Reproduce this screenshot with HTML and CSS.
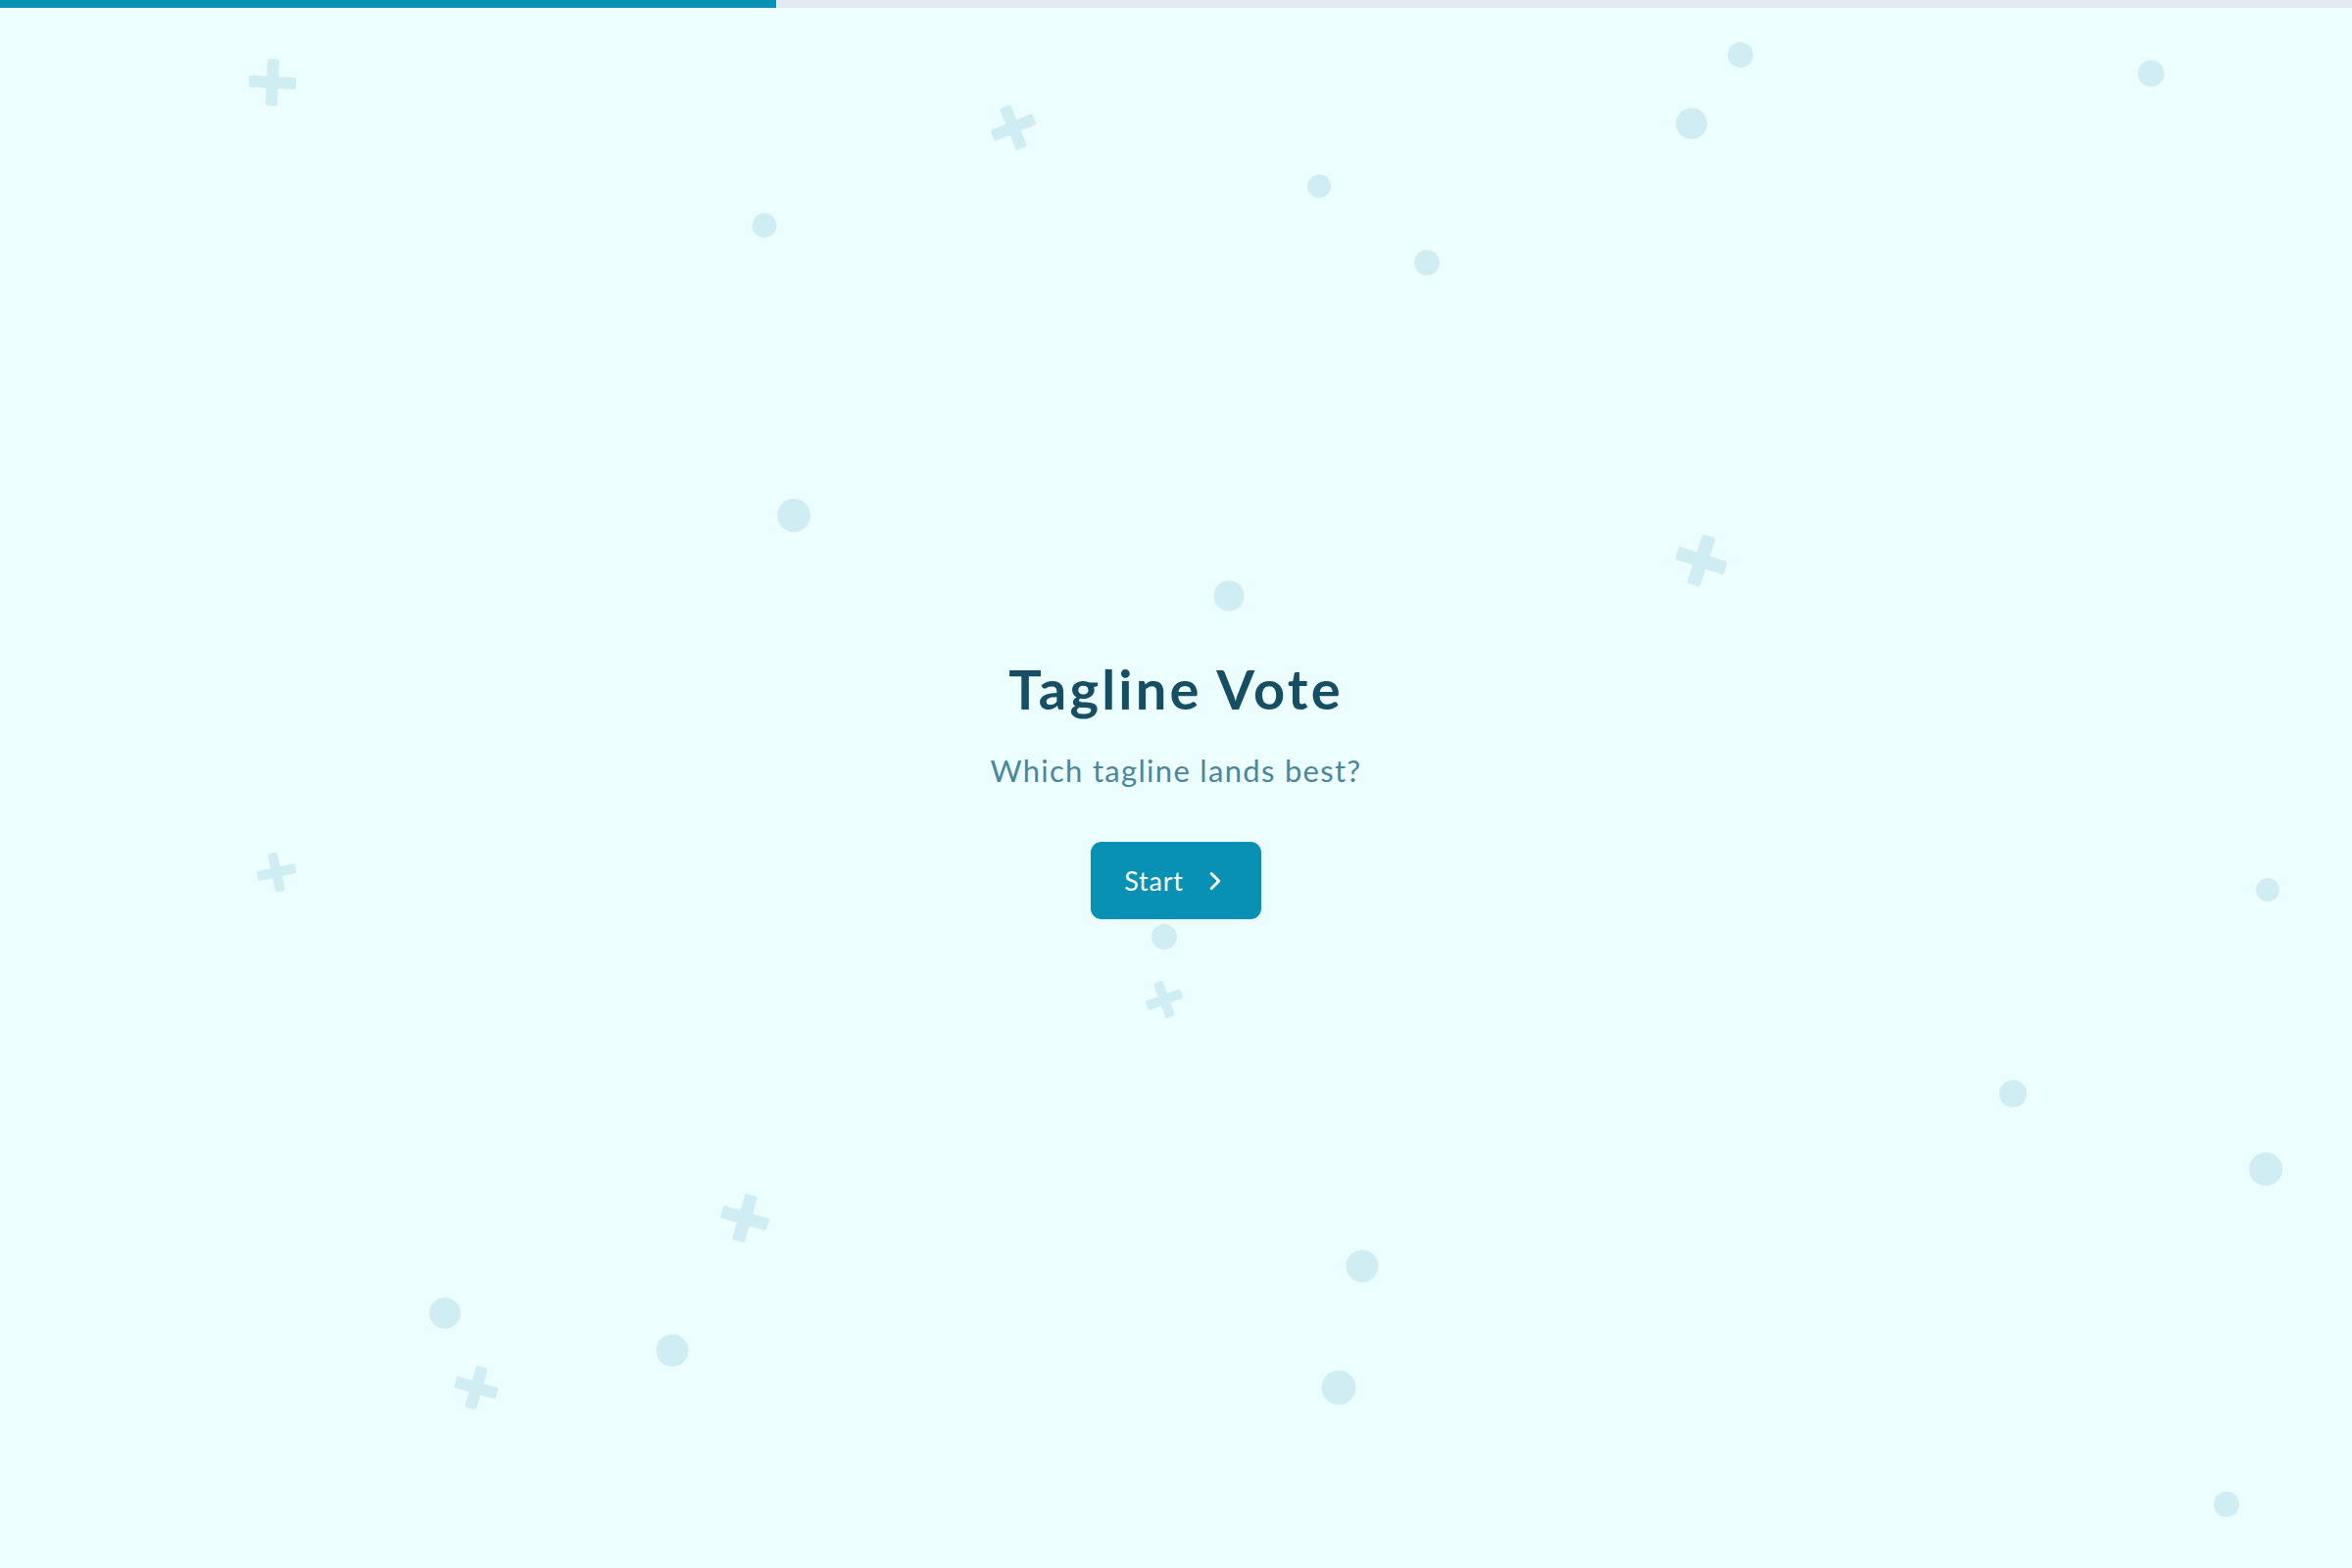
FILE: index.html
```html
<!DOCTYPE html>
<html lang="en">

<head>
  <meta charset="UTF-8">
  <meta name="viewport" content="width=device-width, initial-scale=1.0">
  <title>Tagline Vote</title>
  <link rel="stylesheet" href="styles.css">
</head>

<body>
  <div class="progress">
    <div class="progress-fill"></div>
  </div>

  <div class="confetti">
    <span class="plus" style="--x:278px;--y:84px;--s:48px;--r:3deg"></span>
    <span class="plus" style="--x:1034px;--y:130px;--s:46px;--r:-22deg"></span>
    <span class="plus" style="--x:1736px;--y:572px;--s:52px;--r:18deg"></span>
    <span class="plus" style="--x:282px;--y:890px;--s:40px;--r:-12deg"></span>
    <span class="plus" style="--x:1188px;--y:1020px;--s:38px;--r:-20deg"></span>
    <span class="plus" style="--x:760px;--y:1243px;--s:49px;--r:16deg"></span>
    <span class="plus" style="--x:486px;--y:1416px;--s:44px;--r:16deg"></span>

    <span class="dot" style="--x:1776px;--y:56px;--s:26px"></span>
    <span class="dot" style="--x:1726px;--y:126px;--s:32px"></span>
    <span class="dot" style="--x:2195px;--y:75px;--s:27px"></span>
    <span class="dot" style="--x:780px;--y:230px;--s:25px"></span>
    <span class="dot" style="--x:1346px;--y:190px;--s:24px"></span>
    <span class="dot" style="--x:1456px;--y:268px;--s:26px"></span>
    <span class="dot" style="--x:810px;--y:526px;--s:34px"></span>
    <span class="dot" style="--x:1254px;--y:608px;--s:31px"></span>
    <span class="dot" style="--x:1188px;--y:956px;--s:26px"></span>
    <span class="dot" style="--x:2314px;--y:908px;--s:24px"></span>
    <span class="dot" style="--x:2054px;--y:1116px;--s:28px"></span>
    <span class="dot" style="--x:2312px;--y:1193px;--s:34px"></span>
    <span class="dot" style="--x:1390px;--y:1292px;--s:33px"></span>
    <span class="dot" style="--x:454px;--y:1340px;--s:32px"></span>
    <span class="dot" style="--x:686px;--y:1378px;--s:33px"></span>
    <span class="dot" style="--x:1366px;--y:1416px;--s:35px"></span>
    <span class="dot" style="--x:2272px;--y:1535px;--s:26px"></span>
  </div>

  <main class="intro">
    <h1 class="intro-title">Tagline Vote</h1>
    <p class="intro-sub">Which tagline lands best?</p>
    <button class="start-btn" type="button">
      Start
      <svg class="start-icon" viewBox="0 0 24 24" fill="none" stroke="currentColor" stroke-width="2"
        stroke-linecap="round" stroke-linejoin="round">
        <path d="M9 6l6 6-6 6" />
      </svg>
    </button>
  </main>
</body>

</html>
```

FILE: styles.css
```css
* {
  margin: 0;
  padding: 0;
  box-sizing: border-box;
}

body {
  background-color: #ecfeff;
  font-family: "Lato", "Noto Sans", sans-serif;
  color: #164e63;
  min-height: 100vh;
  overflow: hidden;
}

.progress {
  position: relative;
  z-index: 2;
  height: 8px;
  background-color: #e2e8ee;
}

.progress-fill {
  width: 33%;
  height: 100%;
  background-color: #0891b2;
}

/* background decoration, free canvas */
.confetti {
  position: absolute;
  inset: 0;
  pointer-events: none;
}

.dot,
.plus {
  position: absolute;
  left: var(--x);
  top: var(--y);
  width: var(--s);
  height: var(--s);
  transform: translate(-50%, -50%) rotate(var(--r, 0deg));
}

.dot {
  border-radius: 50%;
  background-color: #cfedf2;
}

.plus::before,
.plus::after {
  content: "";
  position: absolute;
  background-color: #cfedf2;
  border-radius: 2px;
}

.plus::before {
  left: 0;
  right: 0;
  top: 36.5%;
  height: 27%;
}

.plus::after {
  top: 0;
  bottom: 0;
  left: 36.5%;
  width: 27%;
}

.intro {
  position: relative;
  z-index: 1;
  min-height: calc(100vh - 8px);
  display: flex;
  flex-direction: column;
  align-items: center;
  justify-content: center;
  text-align: center;
}

.intro-title {
  font-size: 56px;
  font-weight: 700;
  letter-spacing: 3.2px;
  line-height: 66px;
  color: #164e63;
}

.intro-sub {
  margin-top: 32px;
  font-size: 31px;
  font-weight: 400;
  line-height: 37px;
  letter-spacing: 1.3px;
  color: #4b8799;
}

.start-btn {
  margin-top: 54px;
  display: flex;
  align-items: center;
  gap: 17px;
  height: 79px;
  padding: 0 32px 0 34px;
  border: none;
  border-radius: 11px;
  background-color: #0891b2;
  color: #ffffff;
  font-family: inherit;
  font-size: 27px;
  letter-spacing: 0.8px;
  cursor: pointer;
}

.start-icon {
  width: 30px;
  height: 30px;
  stroke-width: 2.4;
}
```
